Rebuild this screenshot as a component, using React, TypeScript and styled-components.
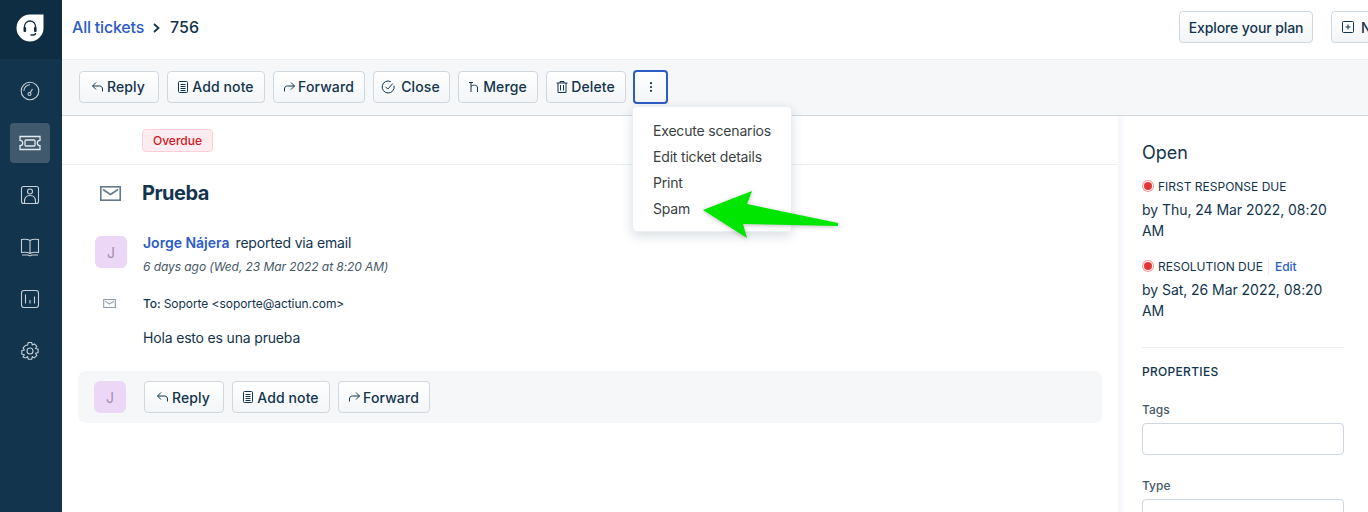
import React from "react";
import styled, { createGlobalStyle } from "styled-components";

const Global = createGlobalStyle`
  html, body {
    margin: 0;
    height: 512px;
    overflow: hidden;
    background: #fff;
    font-family: Inter, "Liberation Sans", sans-serif;
    color: #12344d;
  }
  * { box-sizing: border-box; }
`;

const Page = styled.div`
  display: flex;
  width: 1368px;
  height: 512px;
  overflow: hidden;
`;

const Sidebar = styled.nav`
  width: 62px;
  flex-shrink: 0;
  background: #12344d;
  display: flex;
  flex-direction: column;
  align-items: center;
  padding-right: 2px;
`;

const LogoBox = styled.div`
  width: 62px;
  margin-right: -2px;
  height: 59px;
  background: #0f2d42;
  display: flex;
  align-items: center;
  justify-content: center;
  padding: 0 2px 4px 0;
  margin-bottom: 12px;
`;

const NavItem = styled.div<{ $active?: boolean }>`
  width: 40px;
  height: 40px;
  margin-bottom: 12px;
  border-radius: 4px;
  display: flex;
  align-items: center;
  justify-content: center;
  background: ${(p) => (p.$active ? "#41596d" : "transparent")};
`;

const Main = styled.div`
  flex: 1;
  min-width: 0;
  display: flex;
  flex-direction: column;
`;

const Header = styled.header`
  height: 60px;
  flex-shrink: 0;
  border-bottom: 1px solid #ebeff3;
  display: flex;
  align-items: center;
  padding: 0 0 5px 10px;
`;

const Crumb = styled.a`
  font-size: 16px;
  font-weight: 500;
  letter-spacing: -0.2px;
  color: #2c5cc5;
`;

const CrumbCurrent = styled.span`
  font-size: 16px;
  font-weight: 500;
  color: #12344d;
`;

const Chevron = styled.svg`
  margin: 2px 10px 0 9px;
`;

const HeaderRight = styled.div`
  margin-left: auto;
  display: flex;
  gap: 18px;
  width: 189px;
  flex-shrink: 0;
`;

const Button = styled.button<{ $w: number; $focus?: boolean }>`
  width: ${(p) => p.$w}px;
  flex-shrink: 0;
  height: 32px;
  display: flex;
  align-items: center;
  justify-content: center;
  gap: 2px;
  padding: 0 2px 0 0;
  font-family: inherit;
  font-size: 14px;
  font-weight: 500;
  letter-spacing: 0.1px;
  color: #12344d;
  border-radius: 4px;
  border: 1px solid #cfd7df;
  background: linear-gradient(180deg, #fff, #f3f5f7);
  white-space: nowrap;
`;

const PlanButton = styled(Button)`
  letter-spacing: -0.1px;
  padding: 0;
`;

const NewButton = styled(Button)`
  justify-content: flex-start;
  gap: 6px;
  padding-left: 9px;
`;

const MoreButton = styled(Button)`
  height: 34px;
  margin-left: -1px;
  padding: 0;
  border: 2px solid #2c5cc5;
`;

const Toolbar = styled.div`
  height: 56px;
  flex-shrink: 0;
  background: #f5f7f9;
  border-bottom: 1px solid #cfd7df;
  display: flex;
  align-items: center;
  gap: 8px;
  padding: 0 0 2px 17px;
  position: relative;
`;

const Menu = styled.div`
  position: absolute;
  left: 570px;
  top: 46px;
  width: 160px;
  height: 126px;
  padding: 11px 0 0 20px;
  background: #fff;
  border: 1px solid #ebeff3;
  border-radius: 4px;
  box-shadow: 0 4px 12px rgba(18, 52, 77, 0.16);
  z-index: 3;
`;

const MenuItem = styled.div`
  font-size: 14px;
  line-height: 26px;
  letter-spacing: -0.18px;
  color: #3a3f44;
  white-space: nowrap;
`;

const Arrow = styled.svg`
  position: absolute;
  left: 700px;
  top: 190px;
  z-index: 4;
  filter: drop-shadow(0 1px 2px rgba(0, 0, 0, 0.25));
`;

const Body = styled.div`
  flex: 1;
  display: flex;
  min-height: 0;
`;

const Content = styled.div`
  width: 1056px;
  flex-shrink: 0;
`;

const TagRow = styled.div`
  height: 49px;
  border-bottom: 1px solid #ebeff3;
  padding: 13px 0 0 80px;
`;

const Badge = styled.span`
  display: flex;
  align-items: center;
  justify-content: center;
  width: 71px;
  height: 23px;
  font-size: 12px;
  font-weight: 500;
  color: #d0161f;
  background: #ffecf0;
  border: 1px solid #ffd0d6;
  border-radius: 4px;
`;

const TitleRow = styled.div`
  display: flex;
  align-items: center;
  height: 56px;
  padding: 0 0 0 38px;
`;

const Title = styled.h1`
  margin: 0 0 0 21px;
  font-size: 20px;
  line-height: 26px;
  font-weight: 700;
  letter-spacing: -0.5px;
  color: #12344d;
`;

const Avatar = styled.div`
  width: 32px;
  height: 32px;
  flex-shrink: 0;
  border-radius: 6px;
  background: #ecd8f6;
  color: #a08fae;
  font-size: 14px;
  display: flex;
  align-items: center;
  justify-content: center;
`;

const Reporter = styled.div`
  display: flex;
  gap: 16px;
  margin: 15px 0 0 33px;
`;

const ReporterLine = styled.div`
  font-size: 14px;
  line-height: 20px;
  margin-top: -3px;
  letter-spacing: -0.18px;
  color: #12344d;
`;

const ReporterName = styled.a`
  color: #2c5cc5;
  font-weight: 600;
  letter-spacing: 0;
  margin-right: 6px;
`;

const Ago = styled.div`
  font-size: 12px;
  font-style: italic;
  line-height: 16px;
  letter-spacing: -0.07px;
  color: #475867;
  margin-top: 6px;
`;

const ToRow = styled.div`
  display: flex;
  align-items: center;
  margin: 20px 0 0 41px;
  height: 16px;
  font-size: 12px;
  letter-spacing: -0.05px;
  color: #12344d;
`;

const ToLabel = styled.span`
  font-weight: 500;
  margin: 0 3px 0 27px;
`;

const Message = styled.p`
  margin: 17px 0 0 81px;
  font-size: 14px;
  line-height: 20px;
  letter-spacing: -0.17px;
  color: #12344d;
`;

const ReplyBox = styled.div`
  margin: 23px 0 0 16px;
  width: 1024px;
  height: 52px;
  background: #f5f7f9;
  border-radius: 8px;
  display: flex;
  align-items: center;
  gap: 8px;
  padding-left: 16px;
`;

const ReplyAvatar = styled(Avatar)`
  margin-right: 10px;
`;

const Panel = styled.aside`
  flex: 1;
  min-width: 0;
  padding: 25px 24px 0 24px;
  position: relative;
  background: linear-gradient(90deg, #f4f6fb 0, #fff 8px);
`;

const Status = styled.div`
  font-size: 18px;
  line-height: 24px;
  color: #12344d;
  margin-bottom: 14px;
`;

const DueHead = styled.div`
  display: flex;
  align-items: center;
  font-size: 12px;
  line-height: 16px;
  color: #12344d;
`;

const Dot = styled.span`
  width: 8px;
  height: 8px;
  margin: -3px 6px 0 2px;
  border-radius: 50%;
  background: #e43538;
  box-shadow: 0 0 0 1px #fff, 0 0 0 2px #f09a9b;
`;

const EditLink = styled.a`
  color: #2c5cc5;
  font-weight: 500;
  padding-left: 6px;
  margin-left: 5px;
  border-left: 1px solid #ebeff3;
`;

const DueText = styled.div`
  font-size: 14px;
  line-height: 21px;
  letter-spacing: -0.05px;
  color: #12344d;
  margin: 4px 0 18px;
  width: 202px;
`;

const Divider = styled.div`
  border-top: 1px solid #ebeff3;
  margin-top: 26px;
  width: 202px;
`;

const SectionTitle = styled.div`
  font-size: 12px;
  font-weight: 500;
  letter-spacing: 0.3px;
  line-height: 16px;
  margin: 16px 0 -1px;
  color: #12344d;
`;

const FieldLabel = styled.label`
  display: block;
  font-size: 12px;
  font-weight: 500;
  line-height: 16px;
  color: #475867;
  margin-top: 23px;
`;

const FieldBox = styled.div`
  width: 202px;
  height: 32px;
  margin-top: 5px;
  border: 1px solid #cfd7df;
  border-radius: 4px;
  background: #fff;
`;

const Ico = ({ children, size = 14 }: { children: React.ReactNode; size?: number }) => (
  <svg width={size} height={size} viewBox="0 0 14 14" fill="none" stroke="#12344d" strokeWidth="1">
    {children}
  </svg>
);

const ReplyIcon = () => (
  <Ico>
    <path d="M5 2.500 1.500 6 5 9.500M1.500 6h7c2 0 3 1.200 3 3v2.500" />
  </Ico>
);
const NoteIcon = () => (
  <Ico>
    <rect x="2.500" y="1.500" width="9" height="11" rx="1" />
    <path d="M4.500 4.500h5M4.500 6.500h5M4.500 8.500h5M4.500 10.500h5" />
  </Ico>
);
const ForwardIcon = () => (
  <Ico>
    <path d="m9 2.500 3.500 3.500L9 9.500M12.500 6h-7c-2 0-3 1.200-3 3v2.500" />
  </Ico>
);
const CloseIcon = () => (
  <svg width="18" height="14" viewBox="0 0 18 14" fill="none" stroke="#12344d" strokeWidth="1">
    <path d="M13 5.600A6 6 0 1 1 9.800 1.600" />
    <path d="m4.500 6.800 2.300 2.300 5-5.600" />
  </svg>
);
const MergeIcon = () => (
  <Ico>
    <path d="M2 2.500h4M4 2v10M4 6.500c1-1 2-1.300 3.500-1.300 2 0 3 1 3 2.800V12" />
  </Ico>
);
const TrashIcon = () => (
  <Ico>
    <path d="M1.500 3h11M5 3V1.500h4V3M3 3v9.500h8V3M5.500 5v5.500M8.500 5v5.500" />
  </Ico>
);

const MailIcon = ({ w, h, color }: { w: number; h: number; color: string }) => (
  <svg width={w} height={h} viewBox="0 0 21 15" fill="none" stroke={color} strokeWidth={w > 15 ? 1.6 : 1.8}>
    <rect x="0.800" y="0.800" width="19.400" height="13.400" />
    <path d="m3 3.500 7.500 5 7.500-5" />
  </svg>
);

const NavIcon = ({ children }: { children: React.ReactNode }) => (
  <svg width="20" height="20" viewBox="0 0 20 20" fill="none" stroke="#c7d0d8" strokeWidth="1.100">
    {children}
  </svg>
);

export default function App() {
  return (
    <Page>
      <Global />
      <Sidebar>
        <LogoBox>
          <svg width="28" height="28" viewBox="0 0 28 28">
            <path d="M14 0.500h13.500V14a13.500 13.500 0 1 1-13.500-13.500Z" fill="#fff" />
            <path
              d="M8.500 14v-1.500a5.500 5.500 0 0 1 11 0V14M14.500 21h3c1.300 0 2-.8 2-2"
              fill="none"
              stroke="#0f2d42"
              strokeWidth="1.300"
            />
            <rect x="7.500" y="13" width="2.600" height="5" rx="1" fill="#0f2d42" />
            <rect x="18" y="13" width="2.600" height="5" rx="1" fill="#0f2d42" />
          </svg>
        </LogoBox>
        <NavItem>
          <NavIcon>
            <circle cx="10" cy="10" r="8.800" />
            <path d="M3.800 10A6.200 6.200 0 0 1 10 3.800M12.500 8 10 12" />
            <circle cx="9.500" cy="13" r="1.500" />
          </NavIcon>
        </NavItem>
        <NavItem $active>
          <svg width="22" height="16" viewBox="0 0 22 16" fill="none" stroke="#e4e9ee" strokeWidth="1.300">
            <path d="M1 1.500h20v3.800a2.700 2.700 0 0 0 0 5.400v3.800H1v-3.800a2.700 2.700 0 0 0 0-5.400Z" />
            <rect x="6" y="5" width="10" height="6" rx="1" />
          </svg>
        </NavItem>
        <NavItem>
          <NavIcon>
            <rect x="1.500" y="1.500" width="17" height="17" rx="2" />
            <circle cx="10" cy="6.500" r="2.500" />
            <path d="M4.500 18.500v-2c0-3.500 2-6 5.500-6s5.500 2.500 5.500 6v2" />
          </NavIcon>
        </NavItem>
        <NavItem>
          <NavIcon>
            <path d="M10 3.500C8.500 2.500 5 2 1.500 2.500v13c3.500-.5 7 0 8.500 1 1.500-1 5-1.500 8.500-1v-13C15 2 11.500 2.500 10 3.500ZM10 3.500v13M2 18h6l2 1 2-1h6" />
          </NavIcon>
        </NavItem>
        <NavItem>
          <NavIcon>
            <rect x="1.500" y="1.500" width="17" height="17" rx="2.500" />
            <path d="M5.500 5.500v9M10 11v3.500M14.500 7.500v7" />
          </NavIcon>
        </NavItem>
        <NavItem>
          <NavIcon>
            <circle cx="10" cy="10" r="3" />
            <path d="M8.300 1.500h3.400l.6 2.500 2.100-1.100 2.400 2.400-1.200 2.100 2.500.8v3.400l-2.500.7 1.200 2.200-2.400 2.400-2.100-1.200-.6 2.500H8.300l-.7-2.500-2.100 1.200L3.100 16l1.200-2.200-2.500-.7V9.700l2.500-.8-1.200-2.100 2.400-2.400L7.600 4Z" />
          </NavIcon>
        </NavItem>
      </Sidebar>
      <Main>
        <Header>
          <Crumb>All tickets</Crumb>
          <Chevron width="7" height="10" viewBox="0 0 7 10" fill="none" stroke="#12344d" strokeWidth="1.800">
            <path d="m1 1 4.500 4L1 9" />
          </Chevron>
          <CrumbCurrent>756</CrumbCurrent>
          <HeaderRight>
            <PlanButton $w={134}>Explore your plan</PlanButton>
            <NewButton $w={100}>
              <Ico>
                <rect x="1.500" y="1.500" width="11" height="11" rx="1" />
                <path d="M7 4.500v5M4.500 7h5" />
              </Ico>
              New
            </NewButton>
          </HeaderRight>
        </Header>
        <Toolbar>
          <Button $w={80}>
            <ReplyIcon />
            Reply
          </Button>
          <Button $w={98}>
            <NoteIcon />
            Add note
          </Button>
          <Button $w={92}>
            <ForwardIcon />
            Forward
          </Button>
          <Button $w={77}>
            <CloseIcon />
            Close
          </Button>
          <Button $w={80}>
            <MergeIcon />
            Merge
          </Button>
          <Button $w={80}>
            <TrashIcon />
            Delete
          </Button>
          <MoreButton $w={35} aria-label="More">
            <svg width="4" height="10" viewBox="0 0 4 10" fill="#12344d">
              <circle cx="2" cy="1.200" r="1.100" />
              <circle cx="2" cy="5" r="1.100" />
              <circle cx="2" cy="8.800" r="1.100" />
            </svg>
          </MoreButton>
          <Menu>
            <MenuItem>Execute scenarios</MenuItem>
            <MenuItem>Edit ticket details</MenuItem>
            <MenuItem>Print</MenuItem>
            <MenuItem>Spam</MenuItem>
          </Menu>
        </Toolbar>
        <Body>
          <Content>
            <TagRow>
              <Badge>Overdue</Badge>
            </TagRow>
            <TitleRow>
              <MailIcon w={21} h={15} color="#66798a" />
              <Title>Prueba</Title>
            </TitleRow>
            <Reporter>
              <Avatar>J</Avatar>
              <div>
                <ReporterLine>
                  <ReporterName>Jorge Nájera</ReporterName>reported via email
                </ReporterLine>
                <Ago>6 days ago (Wed, 23 Mar 2022 at 8:20 AM)</Ago>
              </div>
            </Reporter>
            <ToRow>
              <MailIcon w={13} h={9} color="#8d9cab" />
              <ToLabel>To:</ToLabel>
              Soporte &lt;soporte@actiun.com&gt;
            </ToRow>
            <Message>Hola esto es una prueba</Message>
            <ReplyBox>
              <ReplyAvatar>J</ReplyAvatar>
              <Button $w={80}>
                <ReplyIcon />
                Reply
              </Button>
              <Button $w={98}>
                <NoteIcon />
                Add note
              </Button>
              <Button $w={92}>
                <ForwardIcon />
                Forward
              </Button>
            </ReplyBox>
          </Content>
          <Panel>
            <Status>Open</Status>
            <DueHead>
              <Dot />
              FIRST RESPONSE DUE
            </DueHead>
            <DueText>by Thu, 24 Mar 2022, 08:20 AM</DueText>
            <DueHead>
              <Dot />
              RESOLUTION DUE
              <EditLink>Edit</EditLink>
            </DueHead>
            <DueText>by Sat, 26 Mar 2022, 08:20 AM</DueText>
            <Divider />
            <SectionTitle>PROPERTIES</SectionTitle>
            <FieldLabel>Tags</FieldLabel>
            <FieldBox />
            <FieldLabel>Type</FieldLabel>
            <FieldBox />
          </Panel>
        </Body>
      </Main>
      <Arrow width="140" height="60" viewBox="0 0 140 60">
        <path d="M3 20 52 1 47 14 138 33 138 36 43 34 47 48Z" fill="#00e600" />
      </Arrow>
    </Page>
  );
}
